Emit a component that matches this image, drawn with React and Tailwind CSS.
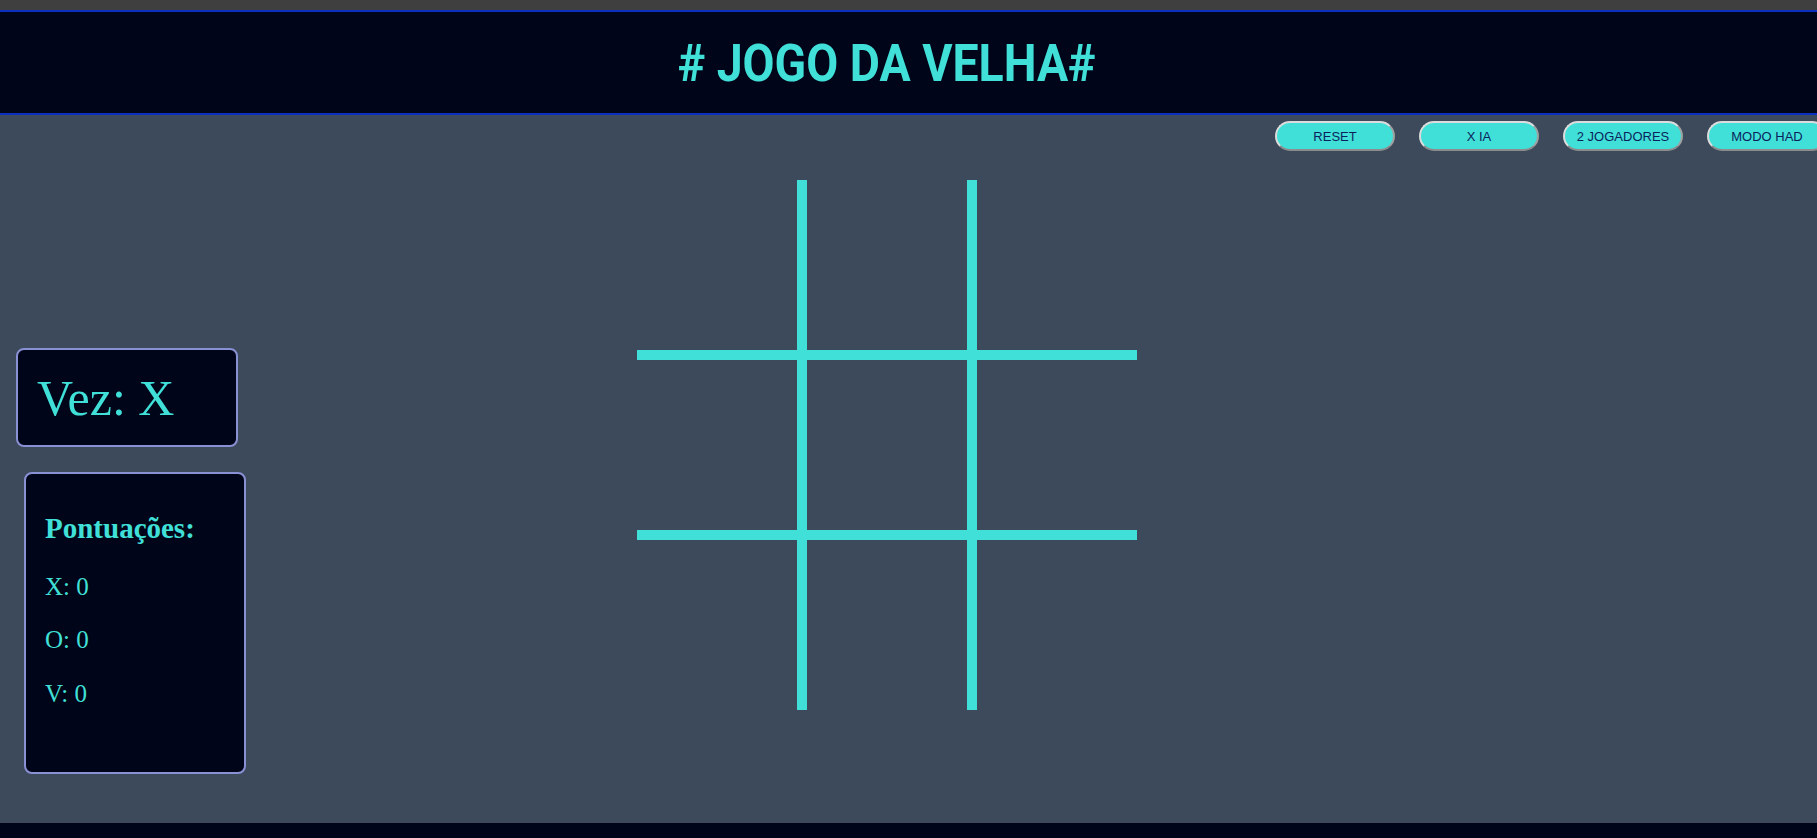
import React, { useState } from "react";

const buttons = ["RESET", "X IA", "2 JOGADORES", "MODO HAD"];

const App = () => {
  const [board] = useState(Array(9).fill(""));
  const [turn] = useState("X");
  const [scores] = useState({ x: 0, o: 0, v: 0 });

  return (
    <div className="min-h-screen w-full overflow-hidden bg-[#3d4a5c] font-['Liberation_Serif',serif]">
      <div className="h-[10px] bg-[#3f3f3f]" />

      <header className="h-[105px] bg-[#000519] border-y-2 border-[#0b2fbf] flex items-center justify-center pr-[43px]">
        <h1 className="text-[51px] leading-none font-bold text-[#40e0d8] font-['Roboto',sans-serif] scale-x-[0.91] pt-[2px]">
          # JOGO DA VELHA#
        </h1>
      </header>

      <div className="flex justify-end gap-[24px] mr-[-10px] mt-[6px] font-['Liberation_Sans',sans-serif]">
        {buttons.map((label) => (
          <button
            key={label}
            className="w-[120px] h-[30px] shrink-0 rounded-full bg-[#40e0d8] text-[13px] text-[#0b1f5c] border-2 border-[#dcdcdc] border-b-[#8c8c8c] border-r-[#a0a0a0] pt-[1px]"
          >
            {label}
          </button>
        ))}
      </div>

      <main className="flex h-[672px]">
        <div className="w-[246px] shrink-0 pt-[197px] flex flex-col">
          <div className="ml-[16px] w-[222px] h-[99px] bg-[#000519] border-2 border-[#8a90d4] rounded-[8px] flex items-center pl-[19px]">
            <span className="text-[50px] leading-none text-[#40e0d8]">Vez: {turn}</span>
          </div>

          <div className="ml-[24px] mt-[25px] w-[222px] h-[302px] bg-[#000519] border-2 border-[#8a90d4] rounded-[8px] pl-[19px] pt-[40px] text-[#40e0d8]">
            <h2 className="text-[29px] font-bold leading-none">Pontuações:</h2>
            <p className="text-[25px] leading-none mt-[31px]">X: {scores.x}</p>
            <p className="text-[25px] leading-none mt-[28px]">O: {scores.o}</p>
            <p className="text-[25px] leading-none mt-[29px]">V: {scores.v}</p>
          </div>
        </div>

        <div className="ml-[391px] mt-[29px] grid grid-cols-[160px_160px_160px] grid-rows-[170px_170px_170px] gap-[10px] bg-[#40e0d8] h-[530px] w-[500px]">
          {board.map((cell, i) => (
            <div key={i} className="bg-[#3d4a5c]">
              {cell}
            </div>
          ))}
        </div>
      </main>

      <footer className="h-[15px] bg-[#000519]" />
    </div>
  );
};

export default App;
